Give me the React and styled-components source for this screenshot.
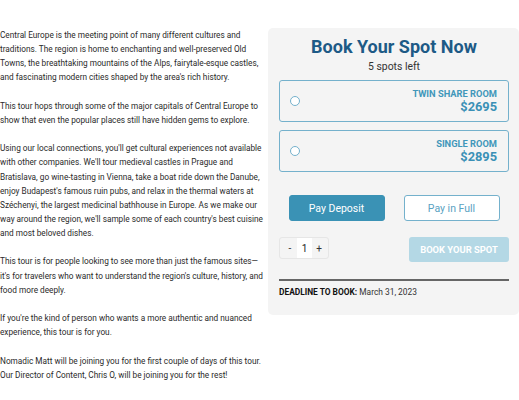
import React, { useState } from 'react';
import styled, { createGlobalStyle } from 'styled-components';

const GlobalStyle = createGlobalStyle`
  html, body {
    margin: 0;
    padding: 0;
    background: #fff;
    font-family: Roboto, 'Liberation Sans', sans-serif;
  }
`;

const rooms = [
  { id: 'twin', name: 'Twin Share Room', price: 2695 },
  { id: 'single', name: 'Single Room', price: 2895 },
];

function App() {
  const [room, setRoom] = useState(null);
  const [payment, setPayment] = useState('deposit');
  const [qty, setQty] = useState(1);

  return (
    <>
      <GlobalStyle />
      <Page>
        <Description>
          <p>
            Central Europe is the meeting point of many different cultures and traditions. The
            region is home to enchanting and well-preserved Old Towns, the breathtaking mountains
            of the Alps, fairytale-esque castles, and fascinating modern cities shaped by the
            area's rich history.
          </p>
          <p>
            This tour hops through some of the major capitals of Central Europe to show that even
            the popular places still have hidden gems to explore.
          </p>
          <p>
            Using our local connections, you'll get cultural experiences not available with other
            companies. We'll tour medieval castles in Prague and Bratislava, go wine-tasting in
            Vienna, take a boat ride down the Danube, enjoy Budapest's famous ruin pubs, and relax
            in the thermal waters at Széchenyi, the largest medicinal bathhouse in Europe. As we
            make our way around the region, we'll sample some of each country's best cuisine and
            most beloved dishes.
          </p>
          <p>
            This tour is for people looking to see more than just the famous sites—it's for
            travelers who want to understand the region's culture, history, and food more deeply.
          </p>
          <p>
            If you're the kind of person who wants a more authentic and nuanced experience, this
            tour is for you.
          </p>
          <p>
            Nomadic Matt will be joining you for the first couple of days of this tour. Our
            Director of Content, Chris O, will be joining you for the rest!
          </p>
        </Description>

        <Booking>
          <Title>Book Your Spot Now</Title>
          <Spots>5 spots left</Spots>

          {rooms.map((r) => (
            <RoomCard key={r.id} onClick={() => setRoom(r.id)}>
              <Radio $checked={room === r.id} />
              <RoomInfo>
                <RoomName>{r.name}</RoomName>
                <RoomPrice>${r.price}</RoomPrice>
              </RoomInfo>
            </RoomCard>
          ))}

          <PayRow>
            <PayButton $active={payment === 'deposit'} onClick={() => setPayment('deposit')}>
              Pay Deposit
            </PayButton>
            <PayButton $active={payment === 'full'} onClick={() => setPayment('full')}>
              Pay in Full
            </PayButton>
          </PayRow>

          <ActionRow>
            <Quantity>
              <QtyStep onClick={() => setQty(Math.max(1, qty - 1))}>-</QtyStep>
              <QtyValue>{qty}</QtyValue>
              <QtyStep onClick={() => setQty(qty + 1)}>+</QtyStep>
            </Quantity>
            <BookButton disabled={!room}>Book Your Spot</BookButton>
          </ActionRow>

          <Deadline>
            <strong>Deadline to book:</strong> March 31, 2023
          </Deadline>
        </Booking>
      </Page>
    </>
  );
}

const Page = styled.div`
  display: flex;
  align-items: flex-start;
  gap: 5px;
  padding-top: 28px;
`;

const Description = styled.div`
  width: 263px;
  flex-shrink: 0;
  font-size: 8.25px;
  line-height: 14.15px;
  color: #2a2a2a;

  p {
    margin: 0 0 14.15px;
  }
`;

const Booking = styled.section`
  width: 251px;
  box-sizing: border-box;
  background: #f4f4f4;
  border-radius: 5px;
  padding: 7px 10px 17px 11px;
`;

const Title = styled.h2`
  margin: 0;
  text-align: center;
  font-size: 18px;
  line-height: 24px;
  font-weight: 700;
  color: #1d5a86;
`;

const Spots = styled.div`
  text-align: center;
  font-size: 10.4px;
  line-height: 14px;
  color: #333;
  margin: 1px 0 6px;
`;

const RoomCard = styled.label`
  display: flex;
  align-items: center;
  justify-content: space-between;
  height: 42px;
  box-sizing: border-box;
  border: 1.5px solid #74b1cc;
  border-radius: 3px;
  padding: 0 11px 0 10px;
  margin-bottom: 8px;
  cursor: pointer;
`;

const Radio = styled.span`
  width: 10px;
  height: 10px;
  box-sizing: border-box;
  border: 1.5px solid #74b1cc;
  border-radius: 50%;
  background: ${(p) => (p.$checked ? '#74b1cc' : '#fff')};
`;

const RoomInfo = styled.div`
  text-align: right;
`;

const RoomName = styled.div`
  font-size: 9.3px;
  line-height: 11px;
  font-weight: 700;
  text-transform: uppercase;
  color: #4197ba;
`;

const RoomPrice = styled.div`
  font-size: 12.8px;
  line-height: 15px;
  font-weight: 700;
  color: #3a90b6;
`;

const PayRow = styled.div`
  display: grid;
  grid-template-columns: 1fr 1fr;
  justify-items: center;
  margin-top: 23px;
`;

const PayButton = styled.button`
  width: 96px;
  height: 26px;
  box-sizing: border-box;
  border-radius: 3px;
  font-family: inherit;
  font-size: 10.5px;
  cursor: pointer;
  border: 1.5px solid ${(p) => (p.$active ? '#3a92b5' : '#74b1cc')};
  background: ${(p) => (p.$active ? '#3a92b5' : '#fff')};
  color: ${(p) => (p.$active ? '#fff' : '#5aa2c2')};
`;

const ActionRow = styled.div`
  display: flex;
  align-items: flex-start;
  justify-content: space-between;
  margin-top: 16px;
`;

const Quantity = styled.div`
  display: flex;
  align-items: stretch;
  height: 22px;
  box-sizing: border-box;
  border: 1px solid #e6e6e6;
  border-radius: 3px;
  padding: 0 5px 0 6px;
  gap: 3px;
`;

const QtyStep = styled.button`
  border: none;
  background: none;
  padding: 0;
  width: 8px;
  font-family: inherit;
  font-size: 10px;
  color: #333;
  cursor: pointer;
`;

const QtyValue = styled.span`
  width: 15px;
  background: #fff;
  display: flex;
  align-items: center;
  justify-content: center;
  font-size: 10px;
  color: #222;
`;

const BookButton = styled.button`
  width: 100px;
  height: 25px;
  border: none;
  border-radius: 3px;
  background: #b4d8e5;
  color: #fff;
  font-family: inherit;
  font-weight: 700;
  font-size: 9.4px;
  text-transform: uppercase;
`;

const Deadline = styled.div`
  margin-top: 17px;
  border-top: 2px solid #666;
  padding-top: 5px;
  font-size: 8.4px;
  line-height: 12px;
  color: #333;

  strong {
    color: #111;
    text-transform: uppercase;
  }
`;

export default App;
